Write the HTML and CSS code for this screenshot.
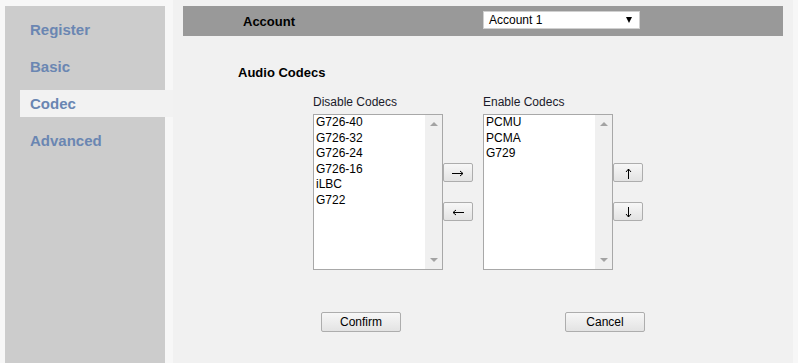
FILE: index.html
```html
<!DOCTYPE html>
<html lang="en">
<head>
    <meta charset="UTF-8">
    <meta name="viewport" content="width=device-width, initial-scale=1.0">
    <title>Codec Settings</title>
    <link rel="stylesheet" href="styles.css">
</head>
<body>
    <div class="page">
        <div class="sidebar">
            <a class="nav-item" href="#">Register</a>
            <a class="nav-item" href="#">Basic</a>
            <a class="nav-item active" href="#">Codec</a>
            <a class="nav-item" href="#">Advanced</a>
        </div>

        <div class="main">
            <div class="header">
                <span class="header-label">Account</span>
                <div class="select">
                    <span>Account 1</span>
                    <span class="select-arrow"></span>
                </div>
            </div>

            <h2 class="section-title">Audio Codecs</h2>

            <div class="codecs">
                <div class="column">
                    <p class="list-label">Disable Codecs</p>
                    <div class="listbox">
                        <ul class="options">
                            <li>G726-40</li>
                            <li>G726-32</li>
                            <li>G726-24</li>
                            <li>G726-16</li>
                            <li>iLBC</li>
                            <li>G722</li>
                        </ul>
                        <div class="scroll">
                            <span class="tri up"></span>
                            <span class="tri down"></span>
                        </div>
                    </div>
                </div>

                <div class="move-buttons">
                    <button class="small-btn" title="Enable">
                        <svg width="12" height="7" viewBox="0 0 12 7"><path d="M0 3.5H11M8 1L11 3.5L8 6" fill="none" stroke="#000" stroke-width="1"/></svg>
                    </button>
                    <button class="small-btn" title="Disable">
                        <svg width="12" height="7" viewBox="0 0 12 7"><path d="M12 3.5H1M4 1L1 3.5L4 6" fill="none" stroke="#000" stroke-width="1"/></svg>
                    </button>
                </div>

                <div class="column enable">
                    <p class="list-label">Enable Codecs</p>
                    <div class="listbox">
                        <ul class="options">
                            <li>PCMU</li>
                            <li>PCMA</li>
                            <li>G729</li>
                        </ul>
                        <div class="scroll">
                            <span class="tri up"></span>
                            <span class="tri down"></span>
                        </div>
                    </div>
                </div>

                <div class="move-buttons">
                    <button class="small-btn" title="Up">
                        <svg width="7" height="11" viewBox="0 0 7 11"><path d="M3.5 11V1M1 4L3.5 1L6 4" fill="none" stroke="#000" stroke-width="1"/></svg>
                    </button>
                    <button class="small-btn" title="Down">
                        <svg width="7" height="11" viewBox="0 0 7 11"><path d="M3.5 0V10M1 7L3.5 10L6 7" fill="none" stroke="#000" stroke-width="1"/></svg>
                    </button>
                </div>
            </div>

            <div class="actions">
                <button class="btn">Confirm</button>
                <button class="btn">Cancel</button>
            </div>
        </div>
    </div>
</body>
</html>
```

FILE: styles.css
```css
body {
    margin: 0;
    background: #f7f7f7;
    font-family: "Liberation Sans", Arial, sans-serif;
    color: #000;
}

.page {
    display: flex;
    height: 100vh;
    overflow: hidden;
}

.sidebar {
    display: flex;
    flex-direction: column;
    gap: 10px;
    width: 160px;
    margin: 6px 0 0 5px;
    padding-top: 10px;
    background: #cccccc;
}

.nav-item {
    display: block;
    height: 27px;
    line-height: 27px;
    margin-left: 15px;
    padding-left: 10px;
    font-size: 15px;
    font-weight: bold;
    color: #6a86b2;
    text-decoration: none;
}

.nav-item.active {
    background: #f2f2f2;
    margin-right: -8px;
}

.main {
    width: 620px;
    margin-left: 8px;
    padding-top: 6px;
    background: #f1f1f1;
}

.header {
    display: flex;
    align-items: center;
    height: 30px;
    margin: 0 10px;
    background: #999999;
}

.header-label {
    width: 240px;
    padding-left: 60px;
    font-size: 13px;
    font-weight: bold;
}

.select {
    display: flex;
    justify-content: space-between;
    align-items: center;
    box-sizing: border-box;
    width: 157px;
    height: 18px;
    padding: 0 7px 0 5px;
    background: #fff;
    border: 1px solid #d0d0d0;
    font-size: 12px;
    margin-top: -2px;
}

.select-arrow {
    width: 0;
    height: 0;
    border-left: 3px solid transparent;
    border-right: 3px solid transparent;
    border-top: 6px solid #000;
}

.section-title {
    margin: 29px 0 0 65px;
    font-size: 13px;
    line-height: 16px;
    font-weight: bold;
}

.codecs {
    display: flex;
    margin: 13px 0 0 140px;
}

.column.enable {
    margin-left: 10px;
}

.list-label {
    margin: 0 0 4px;
    font-size: 12px;
    line-height: 16px;
    color: #1a1a2a;
}

.listbox {
    display: flex;
    width: 130px;
    height: 156px;
    box-sizing: border-box;
    border: 1px solid #a8a8a8;
    background: #fff;
}

.options {
    flex: 1;
    margin: 0;
    padding: 0 0 0 2px;
    list-style: none;
    font-size: 12px;
    line-height: 15.5px;
}

.scroll {
    display: flex;
    flex-direction: column;
    justify-content: space-between;
    align-items: center;
    width: 17px;
    padding: 7px 0;
    box-sizing: border-box;
    background: #f0f0f0;
}

.tri {
    width: 0;
    height: 0;
    border-left: 4px solid transparent;
    border-right: 4px solid transparent;
}

.tri.up {
    border-bottom: 4px solid #a3a3a3;
}

.tri.down {
    border-top: 4px solid #a3a3a3;
}

.move-buttons {
    display: flex;
    flex-direction: column;
    gap: 20px;
    padding-top: 69px;
}

.small-btn,
.btn {
    box-sizing: border-box;
    padding: 0;
    border: 1px solid #adadad;
    border-radius: 2px;
    background: linear-gradient(#f7f7f7, #e3e3e3);
    font-family: "Liberation Sans", Arial, sans-serif;
    font-size: 12px;
    color: #000;
    cursor: pointer;
}

.small-btn {
    display: flex;
    align-items: center;
    justify-content: center;
    width: 30px;
    height: 19px;
}

.small-btn svg {
    display: block;
    margin-top: 2px;
}

.actions {
    display: flex;
    gap: 164px;
    margin: 42px 0 0 148px;
}

.btn {
    width: 80px;
    height: 20px;
}
```
